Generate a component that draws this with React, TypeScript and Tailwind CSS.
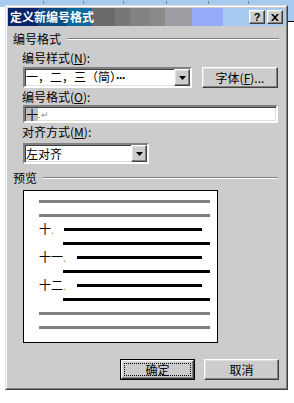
import React from 'react';

const raised =
  'border border-t-white border-l-white border-r-[#404040] border-b-[#404040] shadow-[inset_-1px_-1px_0_#808080,inset_1px_1px_0_#dfdfdf] bg-[#cccccc]';
const sunken =
  'border-2 border-t-[#808080] border-l-[#808080] border-r-white border-b-white shadow-[inset_1px_1px_0_#404040,inset_-1px_-1px_0_#dfdfdf] bg-white';

function Arrow() {
  return (
    <svg width="7" height="4" viewBox="0 0 7 4">
      <path d="M0 0h7L3.5 4z" fill="#000" />
    </svg>
  );
}

function Combo({ text, width, children }: { text: string; width: string; children?: React.ReactNode }) {
  return (
    <div className={`${sunken} ${width} h-[21px] flex items-center`}>
      <span className="flex-1 pl-[1px] text-[12px] leading-[12px] text-black whitespace-nowrap">
        {text}
        {children}
      </span>
      <div className={`${raised} w-[16px] h-[17px] flex items-center justify-center`}>
        <Arrow />
      </div>
    </div>
  );
}

function Label({ text, hot }: { text: string; hot: string }) {
  return (
    <div className="pl-[14px] h-[12px] text-[12px] leading-[12px] text-black whitespace-nowrap">
      {text}(<span className="underline">{hot}</span>):
    </div>
  );
}

function GroupHead({ text, mr }: { text: string; mr: string }) {
  return (
    <div className={`flex items-center h-[12px] pl-[5px] ${mr}`}>
      <span className="text-[12px] leading-[12px] text-black whitespace-nowrap">{text}</span>
      <div className="flex-1 ml-[6px] h-[2px] border-t border-t-[#808080] border-b border-b-white" />
    </div>
  );
}

function Bar({ left, width, color }: { left: string; width: string; color: string }) {
  return <div className={`h-[3px] ${left} ${width} ${color}`} />;
}

function NumRow({ num, lead, width }: { num: string; lead: string; width: string }) {
  return (
    <div className="flex items-center h-[3px] pl-[15px]">
      <span className={`${lead} text-[12px] leading-[12px] text-black whitespace-nowrap`}>
        {num}
        <span className="text-[#c09020] font-['Liberation_Sans',sans-serif]">.</span>
      </span>
      <div className={`h-[3px] ${width} bg-black`} />
    </div>
  );
}

export default function App() {
  return (
    <div className="relative w-[294px] h-[403px] bg-white overflow-hidden font-['Noto_Sans_CJK_SC','Noto_Sans_CJK_JP',sans-serif]">
      {/* word ruler behind the dialog */}
      <div className="absolute top-0 left-0 w-full h-[7px] bg-[#a6caf0] flex items-start">
        <div className="ml-[43px] mt-[1px] w-px h-[3px] bg-[#808080]" />
        <div className="ml-[39px] mt-[1px] w-px h-[3px] bg-[#808080]" />
        <div className="ml-[39px] mt-[1px] w-px h-[3px] bg-[#808080]" />
        <div className="ml-[42px] mt-[1px] w-px h-[3px] bg-[#808080]" />
        <div className="ml-[41px] mt-[1px] w-px h-[3px] bg-[#808080]" />
        <div className="ml-[39px] mt-[1px] w-px h-[3px] bg-[#808080]" />
      </div>
      <div className="absolute top-0 right-0 w-[6px] h-[22px] bg-[#a6caf0] border-b border-b-black" />

      {/* dialog window */}
      <div className="absolute left-[5px] top-[5px] w-[283px] h-[385px] border border-t-[#dfdfdf] border-l-[#dfdfdf] border-r-[#404040] border-b-[#404040]">
        <div className="w-full h-full border border-t-white border-l-white border-r-[#808080] border-b-[#808080] bg-[#cccccc] p-px flex flex-col">
          {/* title bar */}
          <div className="relative h-[18px] flex items-center">
            <div className="absolute inset-0 flex">
              <div className="w-[30px] bg-[#0a246a]" />
              <div className="w-[29px] bg-[#0d4a80]" />
              <div className="w-[25px] bg-[#0e6a9c]" />
              <div className="w-[23px] bg-[#6b6b6b]" />
              <div className="w-[15px] bg-[#777777]" />
              <div className="w-[20px] bg-[#828282]" />
              <div className="w-[15px] bg-[#8a8a8a]" />
              <div className="w-[27px] bg-[#9d9ca2]" />
              <div className="w-[31px] bg-[#96abf8]" />
              <div className="flex-1 bg-[#a6caf0]" />
            </div>
            <span className="relative pl-[2px] text-white font-bold text-[12px] leading-[12px] whitespace-nowrap">
              定义新编号格式
            </span>
            <div className="relative ml-auto mr-[2px] flex gap-[2px]">
              <div className={`${raised} w-[16px] h-[14px] flex items-center justify-center text-[11px] leading-[11px] font-bold text-black font-['Liberation_Sans',sans-serif]`}>
                ?
              </div>
              <div className={`${raised} w-[16px] h-[14px] flex items-center justify-center`}>
                <svg width="8" height="7" viewBox="0 0 8 7">
                  <path d="M0 0h2l2 2.3L6 0h2L5 3.5 8 7H6L4 4.7 2 7H0l3-3.5z" fill="#000" />
                </svg>
              </div>
            </div>
          </div>

          {/* body */}
          <div className="flex flex-col pt-[7px]">
            <GroupHead text="编号格式" mr="mr-[6px]" />
            <div className="mt-[7px]">
              <Label text="编号样式" hot="N" />
            </div>
            <div className="mt-[3px] pl-[15px] flex items-center">
              <Combo text="一，二，三（简）" width="w-[169px]">
                <span className="tracking-[-1px] font-['Liberation_Sans',sans-serif] font-bold">···</span>
              </Combo>
              <div className={`${raised} ml-[10px] w-[76px] h-[21px] flex items-center justify-center text-[12px] leading-[12px] text-black whitespace-nowrap`}>
                字体(<span className="underline">F</span>)...
              </div>
            </div>
            <div className="mt-[3px]">
              <Label text="编号格式" hot="O" />
            </div>
            <div className="mt-[2px] pl-[15px]">
              <div className={`${sunken} w-[255px] h-[18px] flex items-center pl-[1px]`}>
                <span className="bg-[#c0c0c0] text-[12px] leading-[13px] text-black">十</span>
                <span className="text-[8px] leading-[8px] text-[#e00000] self-end mb-[2px]">.</span>
                <span className="text-[9px] leading-[9px] text-[#909090] ml-px">↵</span>
              </div>
            </div>
            <div className="mt-[3px]">
              <Label text="对齐方式" hot="M" />
            </div>
            <div className="mt-[5px] pl-[15px]">
              <Combo text="左对齐" width="w-[126px]" />
            </div>

            <div className="mt-[8px]">
              <GroupHead text="预览" mr="mr-[7px]" />
            </div>

            {/* preview */}
            <div className="mt-[6px] ml-[15px] w-[195px] h-[153px] bg-white border border-black pt-[9px] flex flex-col gap-[11px]">
              <Bar left="ml-[15px]" width="w-[171px]" color="bg-[#808080]" />
              <Bar left="ml-[15px]" width="w-[171px]" color="bg-[#808080]" />
              <NumRow num="十" lead="w-[25px]" width="w-[138px]" />
              <Bar left="ml-[39px]" width="w-[147px]" color="bg-black" />
              <NumRow num="十一" lead="w-[38px]" width="w-[125px]" />
              <Bar left="ml-[39px]" width="w-[147px]" color="bg-black" />
              <NumRow num="十二" lead="w-[38px]" width="w-[125px]" />
              <Bar left="ml-[39px]" width="w-[147px]" color="bg-black" />
              <Bar left="ml-[15px]" width="w-[171px]" color="bg-[#808080]" />
              <Bar left="ml-[15px]" width="w-[171px]" color="bg-[#808080]" />
            </div>

            {/* buttons */}
            <div className="mt-[16px] flex justify-end gap-[9px] pr-[6px]">
              <div className="w-[75px] h-[21px] border border-black">
                <div className={`${raised} w-full h-full p-[2px]`}>
                  <div className="w-full h-full border border-dotted border-black flex items-center justify-center text-[12px] leading-[12px] text-black">
                    确定
                  </div>
                </div>
              </div>
              <div className={`${raised} w-[75px] h-[21px] flex items-center justify-center text-[12px] leading-[12px] text-black`}>
                取消
              </div>
            </div>
          </div>
        </div>
      </div>
    </div>
  );
}
